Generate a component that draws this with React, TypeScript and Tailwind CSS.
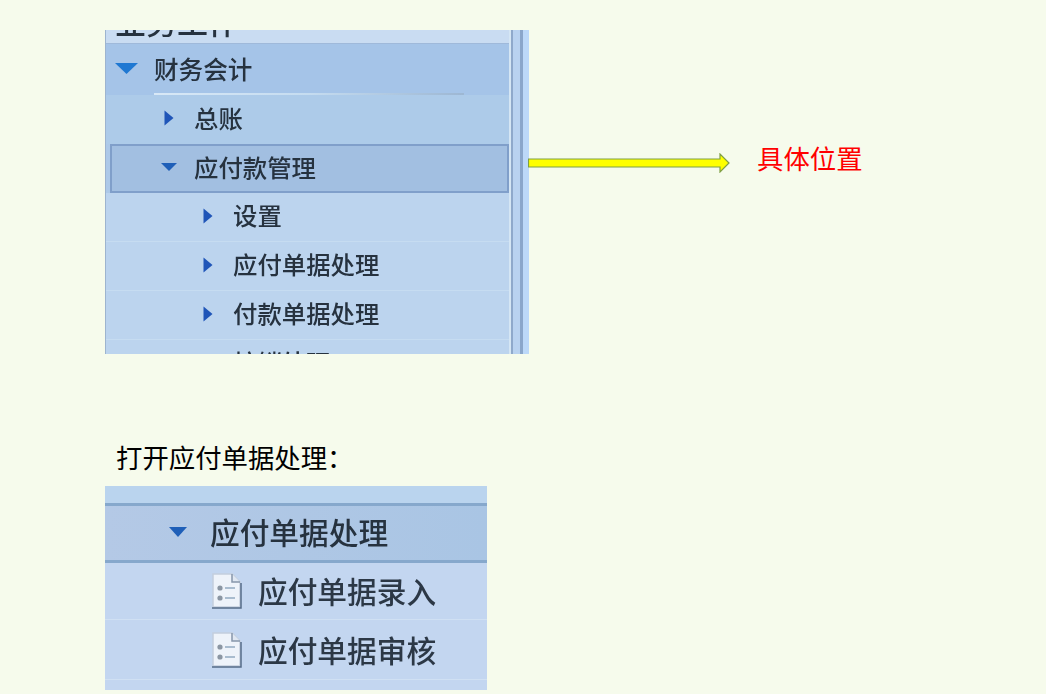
const cjk = "font-['Noto_Sans_CJK_SC','Liberation_Sans',sans-serif]"

function TriangleRight() {
  return (
    <svg width="10" height="16" viewBox="0 0 10 16" className="mb-[3px] shrink-0 blur-[0.4px]">
      <path d="M0.5 0.5 L9.5 8 L0.5 15.5 Z" fill="#1f55b8" />
    </svg>
  )
}

function TriangleDown({ w, h, fill = '#1f5fb8' }: { w: number; h: number; fill?: string }) {
  return (
    <svg width={w} height={h} viewBox="0 0 20 10" preserveAspectRatio="none" className="mb-[3px] shrink-0 blur-[0.4px]">
      <path d="M0 0 L20 0 L10 10 Z" fill={fill} />
    </svg>
  )
}

function DocIcon() {
  return (
    <svg width="31" height="36" viewBox="0 0 31 36" className="shrink-0 blur-[0.5px]">
      <path d="M2 1 H21 L29 9 V34 H2 Z" fill="#eef3fa" stroke="#c3cedd" strokeWidth="1.5" />
      <path d="M21 1 V9 H29" fill="#dfe7f2" stroke="#8796ab" strokeWidth="1.5" />
      <path d="M1 35 H30 V10" fill="none" stroke="#566c88" strokeWidth="1.5" />
      <circle cx="9" cy="15" r="2.6" fill="#8b96a3" />
      <circle cx="9" cy="25" r="2.6" fill="#8b96a3" />
      <path d="M14 15 H24 M14 25 H24" stroke="#a9bccf" strokeWidth="2" />
    </svg>
  )
}

function MenuRow({ label, indent }: { label: string; indent: string }) {
  return (
    <div className={`flex h-[49px] items-center border-b border-[#c6dcf1] bg-[#bcd4ee] ${indent}`}>
      <TriangleRight />
      <span className="mb-[3px] ml-[20px] text-[24.4px] font-medium leading-none text-[#26323f] blur-[0.5px]">{label}</span>
    </div>
  )
}

export default function App() {
  return (
    <div className={`h-[694px] w-[1046px] overflow-hidden bg-[#f6fbec] pl-[105px] pt-[30px] ${cjk}`}>
      {/* first shot: tree menu plus arrow */}
      <div className="flex items-start">
        <div className="flex h-[324px] w-[424px] overflow-hidden border-l border-[#9db4cf]">
          <div className="w-[403px] overflow-hidden">
            <div className="flex h-[14px] items-end overflow-hidden border-b border-[#9fb9da] bg-[#c9dcf2] pl-[9px]">
              <span className="mb-[7px] shrink-0 text-[31px] font-medium leading-none text-[#26323f] blur-[0.5px]">业务工作</span>
            </div>
            <div className="relative flex h-[51px] items-center bg-[#a5c4e8] pl-[9px]">
              <TriangleDown w={23} h={11} fill="#1f78d2" />
              <span className="mb-[2px] ml-[16px] text-[24.6px] font-medium leading-none text-[#26323f] blur-[0.5px]">财务会计</span>
              <div className="absolute bottom-0 left-[48px] h-[2px] w-[310px] bg-gradient-to-r from-[#d8e8f6] via-[#c5dcf0] to-[#9db7d3]" />
            </div>
            <div className="flex h-[49px] items-center bg-[#adcbe9] pl-[58px]">
              <TriangleRight />
              <span className="mb-[3px] ml-[20px] text-[24.4px] font-medium leading-none text-[#26323f] blur-[0.5px]">总账</span>
            </div>
            <div className="bg-[#adc9e8] pl-[4px]">
              <div className="flex h-[49px] items-center border-2 border-[#809fca] bg-[#a2bfe1] pl-[49px]">
                <TriangleDown w={16} h={8} />
                <span className="mb-[3px] ml-[17px] text-[24.4px] font-medium leading-none text-[#26323f] blur-[0.5px]">应付款管理</span>
              </div>
            </div>
            <MenuRow label="设置" indent="pl-[97px]" />
            <MenuRow label="应付单据处理" indent="pl-[97px]" />
            <MenuRow label="付款单据处理" indent="pl-[97px]" />
            <div className="h-[16px] overflow-hidden bg-[#bcd4ee] pl-[127px] pt-[10px]">
              <span className="block text-[24.4px] font-medium leading-none text-[#26323f] blur-[0.5px]">核销处理</span>
            </div>
          </div>
          {/* splitter strip */}
          <div className="flex w-[20px] shrink-0">
            <div className="w-[2px] bg-[#d5e6f4]" />
            <div className="w-[2px] bg-[#8fa9cb]" />
            <div className="w-[7px] bg-[#b9d2f0]" />
            <div className="w-[3px] bg-[#8aa6ca]" />
            <div className="flex-1 bg-[#bcd8f8]" />
          </div>
        </div>
        <svg width="202" height="20" viewBox="0 0 202 20" className="-ml-px mt-[123px] shrink-0">
          <path d="M0.5 6 H192 V1 L201 10 L192 19 V14 H0.5 Z" fill="#ffff00" stroke="#7f9f45" strokeWidth="1.2" />
        </svg>
        <span className="ml-[27px] mt-[109px] text-[26.4px] leading-[38px] text-[#ff0000]">具体位置</span>
      </div>

      <p className="ml-[12px] mt-[85px] -translate-x-px -translate-y-px text-[26.4px] leading-[38px] text-black">打开应付单据处理：</p>

      {/* second shot: expanded node */}
      <div className="mt-[9px] h-[204px] w-[382px] overflow-hidden">
        <div className="h-[20px] border-b-[3px] border-[#86a8cc] bg-[#bad4ee]" />
        <div className="flex h-[57px] items-center border-b-[3px] border-[#86a8cc] bg-gradient-to-r from-[#b4c9e6] to-[#a9c5e4] pl-[64px]">
          <TriangleDown w={18} h={10} />
          <span className="mb-[2px] ml-[23px] text-[29.7px] font-medium leading-none text-[#26323f] blur-[0.5px]">应付单据处理</span>
        </div>
        <div className="flex h-[57px] items-center border-b border-[#d0e0f3] bg-[#c3d6f0] pl-[106px]">
          <DocIcon />
          <span className="ml-[16px] text-[29.7px] font-medium leading-none text-[#2c3846] blur-[0.5px]">应付单据录入</span>
        </div>
        <div className="flex h-[60px] items-center border-b border-[#d0e0f3] bg-[#c3d6f0] pl-[106px]">
          <DocIcon />
          <span className="ml-[16px] text-[29.7px] font-medium leading-none text-[#2c3846] blur-[0.5px]">应付单据审核</span>
        </div>
        <div className="h-[10px] bg-[#c3d6f0]" />
      </div>
    </div>
  )
}
